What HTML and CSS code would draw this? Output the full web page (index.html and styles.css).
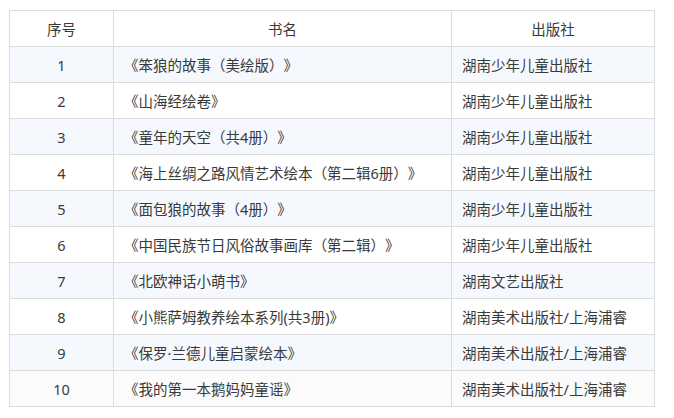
FILE: index.html
```html
<!DOCTYPE html>
<html lang="zh">
<head>
<meta charset="utf-8">
<link rel="stylesheet" href="styles.css">
</head>
<body>
<table class="books">
  <colgroup><col class="c1"><col class="c2"><col class="c3"></colgroup>
  <thead>
    <tr><th>序号</th><th>书名</th><th>出版社</th></tr>
  </thead>
  <tbody>
    <tr><td class="num">1</td><td>《笨狼的故事（美绘版）》</td><td>湖南少年儿童出版社</td></tr>
    <tr><td class="num">2</td><td>《山海经绘卷》</td><td>湖南少年儿童出版社</td></tr>
    <tr><td class="num">3</td><td>《童年的天空（共4册）》</td><td>湖南少年儿童出版社</td></tr>
    <tr><td class="num">4</td><td>《海上丝绸之路风情艺术绘本（第二辑6册）》</td><td>湖南少年儿童出版社</td></tr>
    <tr><td class="num">5</td><td>《面包狼的故事（4册）》</td><td>湖南少年儿童出版社</td></tr>
    <tr><td class="num">6</td><td>《中国民族节日风俗故事画库（第二辑）》</td><td>湖南少年儿童出版社</td></tr>
    <tr><td class="num">7</td><td>《北欧神话小萌书》</td><td>湖南文艺出版社</td></tr>
    <tr><td class="num">8</td><td>《小熊萨姆教养绘本系列(共3册)》</td><td>湖南美术出版社/上海浦睿</td></tr>
    <tr><td class="num">9</td><td>《保罗·兰德儿童启蒙绘本》</td><td>湖南美术出版社/上海浦睿</td></tr>
    <tr><td class="num">10</td><td>《我的第一本鹅妈妈童谣》</td><td>湖南美术出版社/上海浦睿</td></tr>
  </tbody>
</table>
</body>
</html>
```
FILE: styles.css
```css
html, body {
  margin: 0;
  padding: 0;
  background: #fff;
}
body {
  padding: 10px 0 0 9px;
  font-family: "Noto Sans", "Noto Sans CJK SC", sans-serif;
  font-size: 14.5px;
  color: #3a3a3a;
  text-spacing-trim: space-all;
}
.books {
  border-collapse: collapse;
  width: 645px;
  table-layout: fixed;
}
.c1 { width: 104px; }
.c2 { width: 338px; }
.c3 { width: 203px; }
.books th,
.books td {
  border: 1px solid #dcdcdc;
  height: 36px;
  padding: 0 10px;
  box-sizing: border-box;
  font-weight: normal;
  text-align: left;
  white-space: nowrap;
  vertical-align: middle;
  line-height: 20px;
}
.books th { text-align: center; }
.books td.num { text-align: center; }
.books tbody tr:nth-child(odd) { background: #f5f9fe; }
.books tbody tr:nth-child(even) { background: #fff; }
.books tbody tr:last-child { background: #fbfbfb; }
```
